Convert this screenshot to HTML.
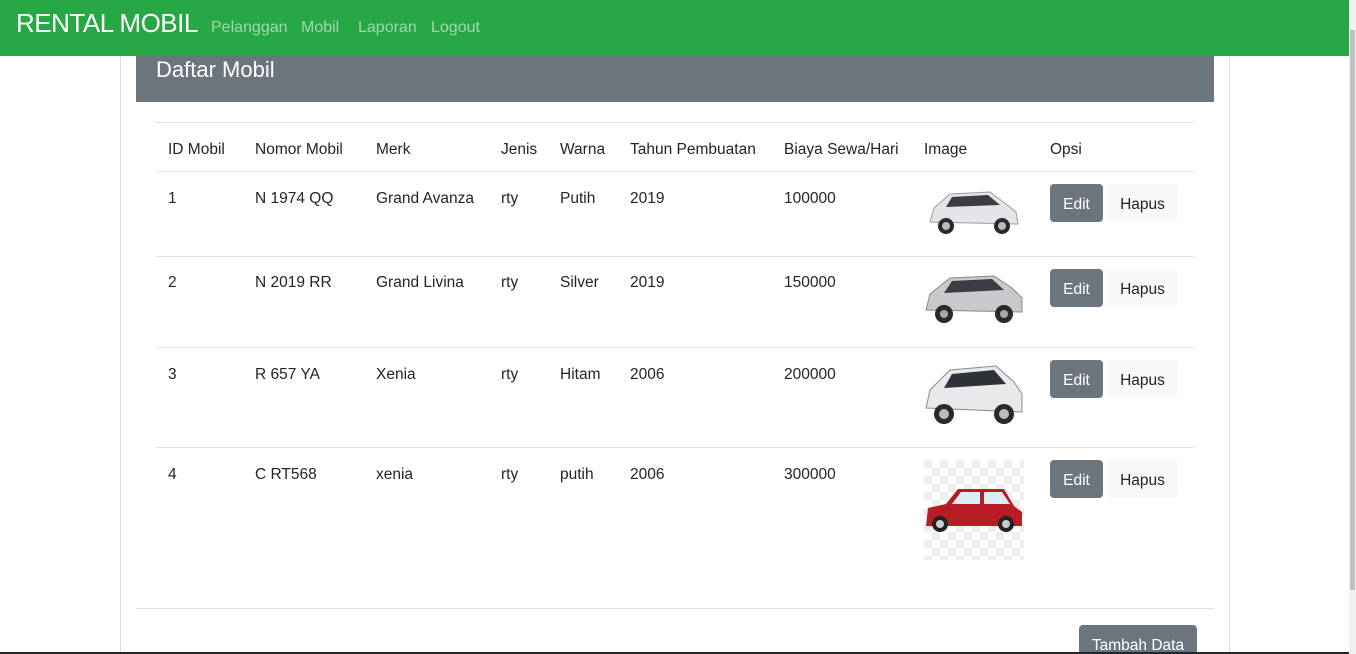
<!DOCTYPE html>
<html><head><style>
*{box-sizing:border-box;margin:0;padding:0}
html,body{width:1356px;height:654px;overflow:hidden}
body{background:#fff;font-family:"Liberation Sans",sans-serif;color:#212529;font-size:16px;position:relative}
.nav{position:absolute;left:0;top:0;width:1349px;height:56px;background:#28a745}
.brand{position:absolute;left:16px;top:8px;font-size:26px;color:#fff;letter-spacing:-0.5px}
.nl{position:absolute;top:19px;font-size:16px;color:rgba(255,255,255,.55)}
.card{position:absolute;left:120px;top:56px;width:1110px;height:598px;border-left:1px solid #ddd;border-right:1px solid #ddd}
.hd{position:absolute;left:136px;top:56px;width:1078px;height:46px;background:#6c757d;color:#fff;font-size:22px;padding:0 20px;line-height:28px}
.t{position:absolute;font-size:15.5px}
.hl{position:absolute;left:156px;width:1038px;height:1px;background:#dee2e6}
.btn{position:absolute;height:38px;border-radius:4px;font-size:15.5px;line-height:42px;text-align:center}
.e{background:#6c757d;color:#fff;width:53px;left:1050px}
.h{background:#f8f9fa;color:#212529;width:71px;left:1107px}
.sb{position:absolute;right:0;top:0;width:7px;height:654px;background:#f1f1f1}
.sb i{position:absolute;left:1px;top:30px;width:5px;height:560px;background:#c1c1c1}
</style></head><body>
<div class="nav"><div class="brand">RENTAL MOBIL</div>
<div class="nl" style="left:211px">Pelanggan</div><div class="nl" style="left:301px">Mobil</div><div class="nl" style="left:358px">Laporan</div><div class="nl" style="left:431px">Logout</div></div>
<div class="card"></div>
<div class="hd">Daftar Mobil</div>
<div class="hl" style="top:122px"></div><div class="hl" style="top:171px"></div><div class="hl" style="top:256px"></div><div class="hl" style="top:347px"></div><div class="hl" style="top:447px"></div>
<div class="hl" style="top:608px;left:136px;width:1078px"></div>

<div class="t" style="top:141px;left:168px">ID Mobil</div><div class="t" style="top:141px;left:255px">Nomor Mobil</div><div class="t" style="top:141px;left:376px">Merk</div><div class="t" style="top:141px;left:501px">Jenis</div><div class="t" style="top:141px;left:560px">Warna</div><div class="t" style="top:141px;left:630px">Tahun Pembuatan</div><div class="t" style="top:141px;left:784px">Biaya Sewa/Hari</div><div class="t" style="top:141px;left:924px">Image</div><div class="t" style="top:141px;left:1050px">Opsi</div>

<div class="t" style="top:190px;left:168px">1</div><div class="t" style="top:190px;left:255px">N 1974 QQ</div><div class="t" style="top:190px;left:376px">Grand Avanza</div><div class="t" style="top:190px;left:501px">rty</div><div class="t" style="top:190px;left:560px">Putih</div><div class="t" style="top:190px;left:630px">2019</div><div class="t" style="top:190px;left:784px">100000</div>
<div class="t" style="top:274px;left:168px">2</div><div class="t" style="top:274px;left:255px">N 2019 RR</div><div class="t" style="top:274px;left:376px">Grand Livina</div><div class="t" style="top:274px;left:501px">rty</div><div class="t" style="top:274px;left:560px">Silver</div><div class="t" style="top:274px;left:630px">2019</div><div class="t" style="top:274px;left:784px">150000</div>
<div class="t" style="top:366px;left:168px">3</div><div class="t" style="top:366px;left:255px">R 657 YA</div><div class="t" style="top:366px;left:376px">Xenia</div><div class="t" style="top:366px;left:501px">rty</div><div class="t" style="top:366px;left:560px">Hitam</div><div class="t" style="top:366px;left:630px">2006</div><div class="t" style="top:366px;left:784px">200000</div>
<div class="t" style="top:466px;left:168px">4</div><div class="t" style="top:466px;left:255px">C RT568</div><div class="t" style="top:466px;left:376px">xenia</div><div class="t" style="top:466px;left:501px">rty</div><div class="t" style="top:466px;left:560px">putih</div><div class="t" style="top:466px;left:630px">2006</div><div class="t" style="top:466px;left:784px">300000</div>

<svg style="position:absolute;left:926px;top:186px" width="94" height="52" viewBox="0 0 94 52"><path d="M4 36 L8 22 L24 8 L64 6 L80 18 L90 26 L92 38 Z" fill="#e4e5e8" stroke="#9a9ca0"/><path d="M26 11 L62 9 L74 19 L20 21Z" fill="#3a3d44"/><circle cx="20" cy="40" r="8" fill="#2a2a2a"/><circle cx="76" cy="40" r="8" fill="#2a2a2a"/><circle cx="20" cy="40" r="4" fill="#bbb"/><circle cx="76" cy="40" r="4" fill="#bbb"/></svg>
<svg style="position:absolute;left:924px;top:270px" width="100" height="58" viewBox="0 0 100 58"><path d="M2 40 L6 24 L26 8 L70 6 L88 18 L98 28 L98 42 Z" fill="#c8c9cd" stroke="#888"/><path d="M28 11 L68 9 L80 20 L20 23Z" fill="#3a3d44"/><circle cx="20" cy="44" r="9" fill="#2a2a2a"/><circle cx="80" cy="44" r="9" fill="#2a2a2a"/><circle cx="20" cy="44" r="4" fill="#aaa"/><circle cx="80" cy="44" r="4" fill="#aaa"/></svg>
<svg style="position:absolute;left:924px;top:362px" width="100" height="68" viewBox="0 0 100 68"><path d="M2 46 L6 28 L26 8 L72 4 L90 20 L98 32 L98 50 Z" fill="#e8e9eb" stroke="#888"/><path d="M28 12 L70 8 L82 22 L20 26Z" fill="#2e3138"/><circle cx="20" cy="52" r="10" fill="#2a2a2a"/><circle cx="80" cy="52" r="10" fill="#2a2a2a"/><circle cx="20" cy="52" r="5" fill="#bbb"/><circle cx="80" cy="52" r="5" fill="#bbb"/></svg>
<svg style="position:absolute;left:924px;top:460px" width="100" height="100" viewBox="0 0 100 100"><defs><pattern id="c" width="16" height="16" patternUnits="userSpaceOnUse"><rect width="16" height="16" fill="#fff"/><rect width="8" height="8" fill="#eee"/><rect x="8" y="8" width="8" height="8" fill="#eee"/></pattern></defs><rect width="100" height="100" fill="url(#c)"/><path d="M2 66 L4 48 L22 44 L34 29 L80 29 L90 46 L98 52 L98 66 Z" fill="#b81c25"/><path d="M37 32 L56 32 L56 44 L28 44Z M60 32 L78 32 L86 44 L60 44Z" fill="#dbeef4"/><circle cx="16" cy="64" r="8" fill="#222"/><circle cx="82" cy="64" r="8" fill="#222"/><circle cx="16" cy="64" r="4" fill="#ccc"/><circle cx="82" cy="64" r="4" fill="#ccc"/></svg>

<div class="btn e" style="top:184px">Edit</div><div class="btn h" style="top:184px">Hapus</div>
<div class="btn e" style="top:269px">Edit</div><div class="btn h" style="top:269px">Hapus</div>
<div class="btn e" style="top:360px">Edit</div><div class="btn h" style="top:360px">Hapus</div>
<div class="btn e" style="top:460px">Edit</div><div class="btn h" style="top:460px">Hapus</div>
<div class="btn e" style="top:625px;left:1079px;width:118px;height:40px;line-height:42px">Tambah Data</div>
<div class="sb"><i></i></div>
<div style="position:absolute;left:0;top:652px;width:1349px;height:2px;background:#1e2a2a"></div>
</body></html>
